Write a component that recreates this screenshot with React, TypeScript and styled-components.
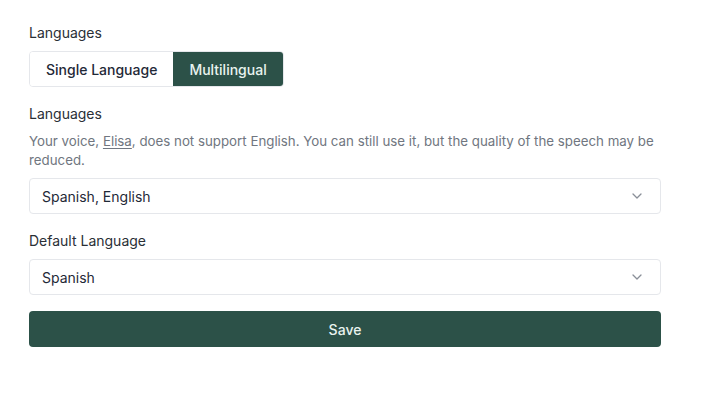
import React from "react";
import styled, { createGlobalStyle } from "styled-components";

const GlobalStyle = createGlobalStyle`
  body {
    margin: 0;
    background: #ffffff;
    font-family: Inter, "Liberation Sans", sans-serif;
    color: #1f2937;
  }
`;

const Page = styled.div`
  width: 632px;
  padding: 23px 29px;
  display: flex;
  flex-direction: column;
`;

const Label = styled.div<{ $top?: number }>`
  font-size: 14px;
  line-height: 20px;
  color: #2a2f36;
  margin-top: ${(p) => p.$top ?? 0}px;
  margin-bottom: 8px;
`;

const Toggle = styled.div`
  display: flex;
  align-self: flex-start;
  height: 36px;
  border: 1px solid #e5e7eb;
  border-radius: 4px;
  overflow: hidden;
  box-sizing: border-box;
`;

const ToggleButton = styled.button<{ $active?: boolean }>`
  border: none;
  margin: 0;
  padding: 0 16px;
  font-family: inherit;
  font-size: 14px;
  font-weight: 500;
  background: ${(p) => (p.$active ? "#2c5148" : "#ffffff")};
  color: ${(p) => (p.$active ? "#e8f3ef" : "#1f2937")};
  cursor: pointer;
`;

const Hint = styled.p`
  margin: 0 0 8px;
  font-size: 13.3px;
  line-height: 19px;
  color: #707680;
`;

const Name = styled.span`
  text-decoration: underline;
  text-underline-offset: 2px;
`;

const Select = styled.div`
  height: 36px;
  box-sizing: border-box;
  border: 1px solid #e5e7eb;
  border-radius: 4px;
  padding: 0 18px 0 12px;
  display: flex;
  align-items: center;
  justify-content: space-between;
  font-size: 14px;
  color: #1f2937;
`;

const SaveButton = styled.button`
  margin-top: 16px;
  height: 36px;
  border: none;
  border-radius: 4px;
  background: #2c5148;
  color: #e8f3ef;
  font-family: inherit;
  font-size: 14px;
  font-weight: 500;
  cursor: pointer;
`;

const Chevron = () => (
  <svg width="10" height="6" viewBox="0 0 10 6" fill="none">
    <path d="M1 1l4 4 4-4" stroke="#8a8f98" strokeWidth="1.3" strokeLinecap="round" strokeLinejoin="round" />
  </svg>
);

export default function App() {
  return (
    <Page>
      <GlobalStyle />
      <Label>Languages</Label>
      <Toggle>
        <ToggleButton>Single Language</ToggleButton>
        <ToggleButton $active>Multilingual</ToggleButton>
      </Toggle>
      <Label $top={17}>Languages</Label>
      <Hint>
        Your voice, <Name>Elisa</Name>, does not support English. You can still use it, but the quality of the speech
        may be reduced.
      </Hint>
      <Select>
        <span>Spanish, English</span>
        <Chevron />
      </Select>
      <Label $top={17}>Default Language</Label>
      <Select>
        <span>Spanish</span>
        <Chevron />
      </Select>
      <SaveButton>Save</SaveButton>
    </Page>
  );
}
